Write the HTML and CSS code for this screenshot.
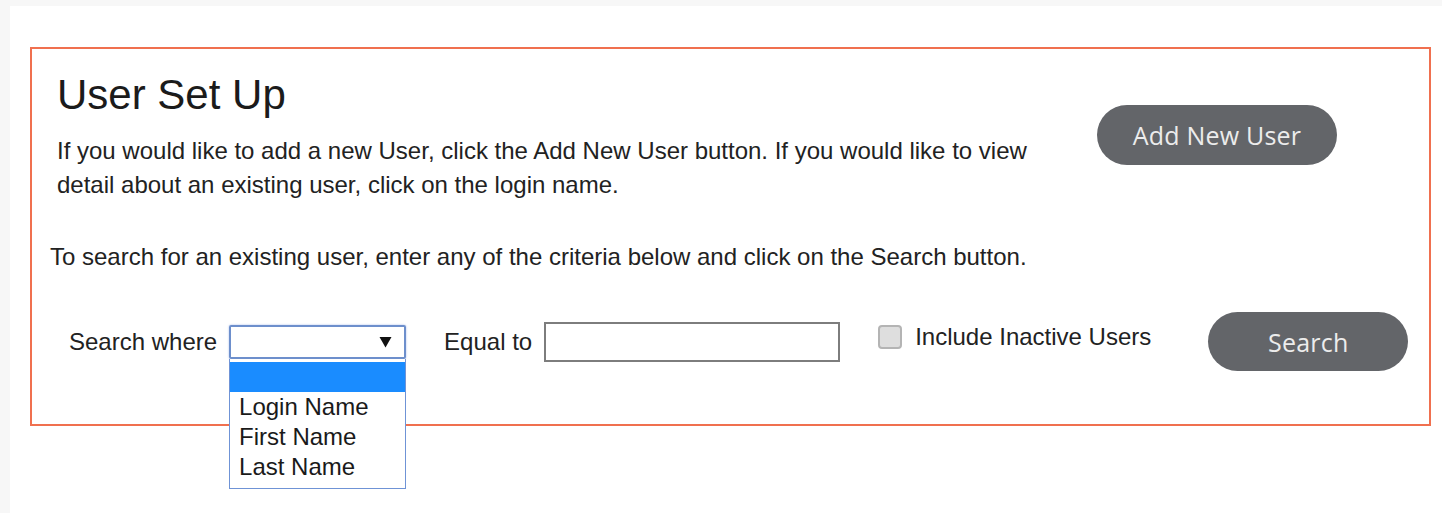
FILE: index.html
```html
<!DOCTYPE html>
<html lang="en">
<head>
<meta charset="utf-8">
<title>User Set Up</title>
<link rel="stylesheet" href="styles.css">
</head>
<body>
<div class="page">
  <section class="panel">
    <div class="header">
      <div class="intro">
        <h1 class="title">User Set Up</h1>
        <p class="lead">If you would like to add a new User, click the Add New User button. If you would like to view detail about an existing user, click on the login name.</p>
      </div>
      <button class="pill pill-add" type="button">Add New User</button>
    </div>
    <p class="hint">To search for an existing user, enter any of the criteria below and click on the Search button.</p>
    <div class="search-row">
      <span class="field-label">Search where</span>
      <div class="select-wrap">
        <div class="select-box">
          <svg class="caret" width="13" height="12" viewBox="0 0 13 12"><path d="M0.5 1 L12.5 1 L6.5 11.5 Z" fill="#111"/></svg>
        </div>
        <ul class="select-list">
          <li class="opt opt-active">&nbsp;</li>
          <li class="opt">Login Name</li>
          <li class="opt">First Name</li>
          <li class="opt">Last Name</li>
        </ul>
      </div>
      <span class="field-label label-equal">Equal to</span>
      <div class="text-input"></div>
      <label class="check">
        <span class="check-box"></span>
        <span class="check-text">Include Inactive Users</span>
      </label>
      <button class="pill pill-search" type="button">Search</button>
    </div>
  </section>
</div>
</body>
</html>
```
FILE: styles.css
```css
html, body {
  margin: 0;
  padding: 0;
}

body {
  background: #f7f7f7;
  font-family: "Liberation Sans", Arial, sans-serif;
  color: #222;
}

.page {
  margin: 6px 0 0 10px;
  min-height: 507px;
  background: #fff;
  padding: 41px 0 0 20px;
  box-sizing: border-box;
}

.panel {
  width: 1401px;
  box-sizing: border-box;
  border: 2px solid #f0704f;
  padding: 22px 0 53px 18px;
}

.header {
  display: flex;
  justify-content: space-between;
  padding-right: 92px;
}

.intro {
  padding-left: 7px;
}

.title {
  margin: 0;
  font-size: 42px;
  line-height: 48px;
  font-weight: normal;
  color: #1b1b1b;
}

.lead {
  margin: 15px 0 0;
  width: 1000px;
  font-size: 24px;
  line-height: 34px;
}

.hint {
  margin: 38px 0 0;
  font-size: 24px;
  line-height: 34px;
}

.pill {
  border: none;
  border-radius: 30px;
  background: #636569;
  color: #ececec;
  font-family: "Open Sans", sans-serif;
  font-weight: 500;
  font-size: 25px;
  letter-spacing: 0.2px;
  padding: 0;
  cursor: pointer;
}

.pill-add {
  align-self: flex-start;
  margin-top: 34px;
  width: 240px;
  height: 60px;
}

.search-row {
  display: flex;
  align-items: center;
  margin-top: 38px;
  padding-left: 19px;
  font-size: 24px;
}

.field-label {
  white-space: nowrap;
}

.select-wrap {
  position: relative;
  margin-left: 12px;
}

.select-box {
  width: 177px;
  height: 34px;
  box-sizing: border-box;
  border: 2px solid #6d8fcc;
  border-radius: 2px;
  box-shadow: 0 0 2px rgba(90, 130, 220, 0.6);
  display: flex;
  align-items: center;
  justify-content: flex-end;
  padding-right: 12px;
}

.caret {
  display: block;
  margin-top: 1px;
}

.select-list {
  position: absolute;
  left: 0;
  top: 34px;
  width: 177px;
  box-sizing: border-box;
  margin: 0;
  padding: 3px 0 6px;
  list-style: none;
  background: #fff;
  border: 1px solid #6f93d6;
  border-top: none;
}

.opt {
  height: 30px;
  line-height: 30px;
  padding-left: 9px;
  font-size: 24px;
  color: #1a1a1a;
}

.opt-active {
  background: #1a8cff;
}

.label-equal {
  margin-left: 38px;
}

.text-input {
  margin-left: 12px;
  width: 296px;
  height: 40px;
  box-sizing: border-box;
  border: 2px solid #7d7d7d;
  background: #fff;
}

.check {
  display: flex;
  align-items: center;
  margin-left: 38px;
  margin-bottom: 10px;
}

.check-box {
  width: 24px;
  height: 24px;
  box-sizing: border-box;
  border: 2px solid #b4b4b4;
  border-radius: 4px;
  background: #dedede;
}

.check-text {
  margin-left: 13px;
  white-space: nowrap;
}

.pill-search {
  margin-left: 57px;
  width: 200px;
  height: 59px;
}
```
